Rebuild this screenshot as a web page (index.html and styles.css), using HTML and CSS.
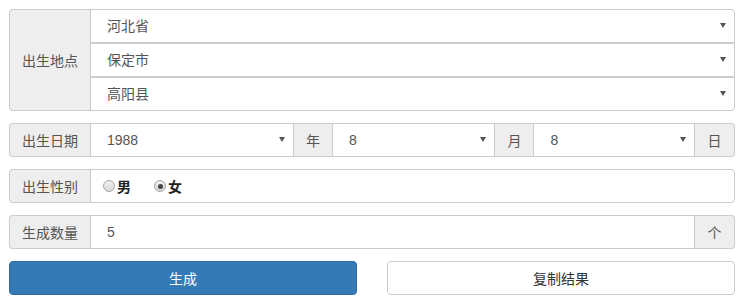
FILE: index.html
```html
<!DOCTYPE html>
<html lang="zh-CN">
<head>
    <meta charset="UTF-8">
    <title>身份证生成</title>
    <link rel="stylesheet" href="styles.css">
</head>
<body>
    <div class="form">
        <!-- 出生地点 -->
        <div class="group">
            <span class="addon addon-first addon-tall">出生地点</span>
            <div class="stack">
                <div class="select-wrap"><select class="control"><option>河北省</option></select></div>
                <div class="select-wrap"><select class="control"><option>保定市</option></select></div>
                <div class="select-wrap"><select class="control"><option>高阳县</option></select></div>
            </div>
        </div>

        <!-- 出生日期 -->
        <div class="group date-group">
            <span class="addon addon-first">出生日期</span>
            <div class="select-wrap"><select class="control"><option>1988</option></select></div>
            <span class="addon">年</span>
            <div class="select-wrap"><select class="control"><option>8</option></select></div>
            <span class="addon">月</span>
            <div class="select-wrap"><select class="control"><option>8</option></select></div>
            <span class="addon addon-last">日</span>
        </div>

        <!-- 出生性别 -->
        <div class="group">
            <span class="addon addon-first">出生性别</span>
            <div class="control radios">
                <label class="radio"><input type="radio" name="sex" value="m">男</label>
                <label class="radio"><input type="radio" name="sex" value="f" checked>女</label>
            </div>
        </div>

        <!-- 生成数量 -->
        <div class="group">
            <span class="addon addon-first">生成数量</span>
            <input class="control" type="text" value="5">
            <span class="addon addon-last">个</span>
        </div>

        <div class="actions">
            <button class="btn btn-primary">生成</button>
            <button class="btn btn-default">复制结果</button>
        </div>
    </div>
</body>
</html>
```

FILE: styles.css
```css
/* Base */
body {
    margin: 0;
    font-family: "Liberation Sans", "Noto Sans CJK SC", sans-serif;
    font-size: 14px;
    color: #333;
    background: #fff;
}

.form {
    width: 726px;
    padding: 9px;
}

/* Input groups */
.group {
    display: flex;
    margin-bottom: 12px;
}

.addon {
    display: flex;
    align-items: center;
    justify-content: center;
    box-sizing: border-box;
    height: 34px;
    padding: 0 12px;
    background-color: #eee;
    border: 1px solid #ccc;
    border-left: none;
    border-right: none;
    color: #555;
    white-space: nowrap;
}

.addon-first {
    width: 81px;
    border-left: 1px solid #ccc;
    border-radius: 4px 0 0 4px;
}

.addon-last {
    width: 40px;
    border-right: 1px solid #ccc;
    border-radius: 0 4px 4px 0;
}

.addon-tall {
    height: auto;
}

.control {
    box-sizing: border-box;
    width: 100%;
    height: 34px;
    margin: 0;
    padding: 0 12px 0 16px;
    border: 1px solid #ccc;
    background-color: #fff;
    color: #555;
    font: inherit;
    outline: none;
}

.group > .control,
.group > .select-wrap {
    flex: 1;
}

.group > .control:last-child {
    border-radius: 0 4px 4px 0;
}

/* Selects */
.select-wrap {
    position: relative;
}

.select-wrap select {
    appearance: none;
    -webkit-appearance: none;
}

.select-wrap::after {
    content: "";
    position: absolute;
    right: 9px;
    top: 14px;
    border-left: 3px solid transparent;
    border-right: 3px solid transparent;
    border-top: 5px solid #555;
    pointer-events: none;
}

.stack {
    flex: 1;
    display: flex;
    flex-direction: column;
}

.stack .select-wrap:first-child .control {
    border-top-right-radius: 4px;
}

.stack .select-wrap:last-child .control {
    border-bottom-right-radius: 4px;
}

.date-group .select-wrap:nth-of-type(1) {
    flex: 202;
}

.date-group .select-wrap:nth-of-type(2) {
    flex: 162;
}

.date-group .select-wrap:nth-of-type(3) {
    flex: 160;
}

/* Radios */
.radios {
    display: flex;
    align-items: center;
    padding-left: 12px;
    color: #222;
}

.radio {
    display: flex;
    align-items: center;
    margin-right: 23px;
    font-weight: 600;
}

.radio input {
    appearance: none;
    -webkit-appearance: none;
    box-sizing: border-box;
    width: 12px;
    height: 12px;
    margin: 0 2px 0 0;
    border: 1px solid #a6a6a6;
    border-radius: 50%;
    background: linear-gradient(#f0f0f0, #d8d8d8);
    position: relative;
}

.radio input:checked::after {
    content: "";
    position: absolute;
    left: 2.5px;
    top: 2.5px;
    width: 5px;
    height: 5px;
    border-radius: 50%;
    background: #444;
}

/* Buttons */
.actions {
    display: grid;
    grid-template-columns: 1fr 1fr;
    gap: 30px;
}

.btn {
    height: 34px;
    border-radius: 4px;
    font: inherit;
    cursor: pointer;
}

.btn-primary {
    background-color: #337ab7;
    border: 1px solid #2e6da4;
    color: #fff;
}

.btn-default {
    background-color: #fff;
    border: 1px solid #ccc;
    color: #333;
}
```
